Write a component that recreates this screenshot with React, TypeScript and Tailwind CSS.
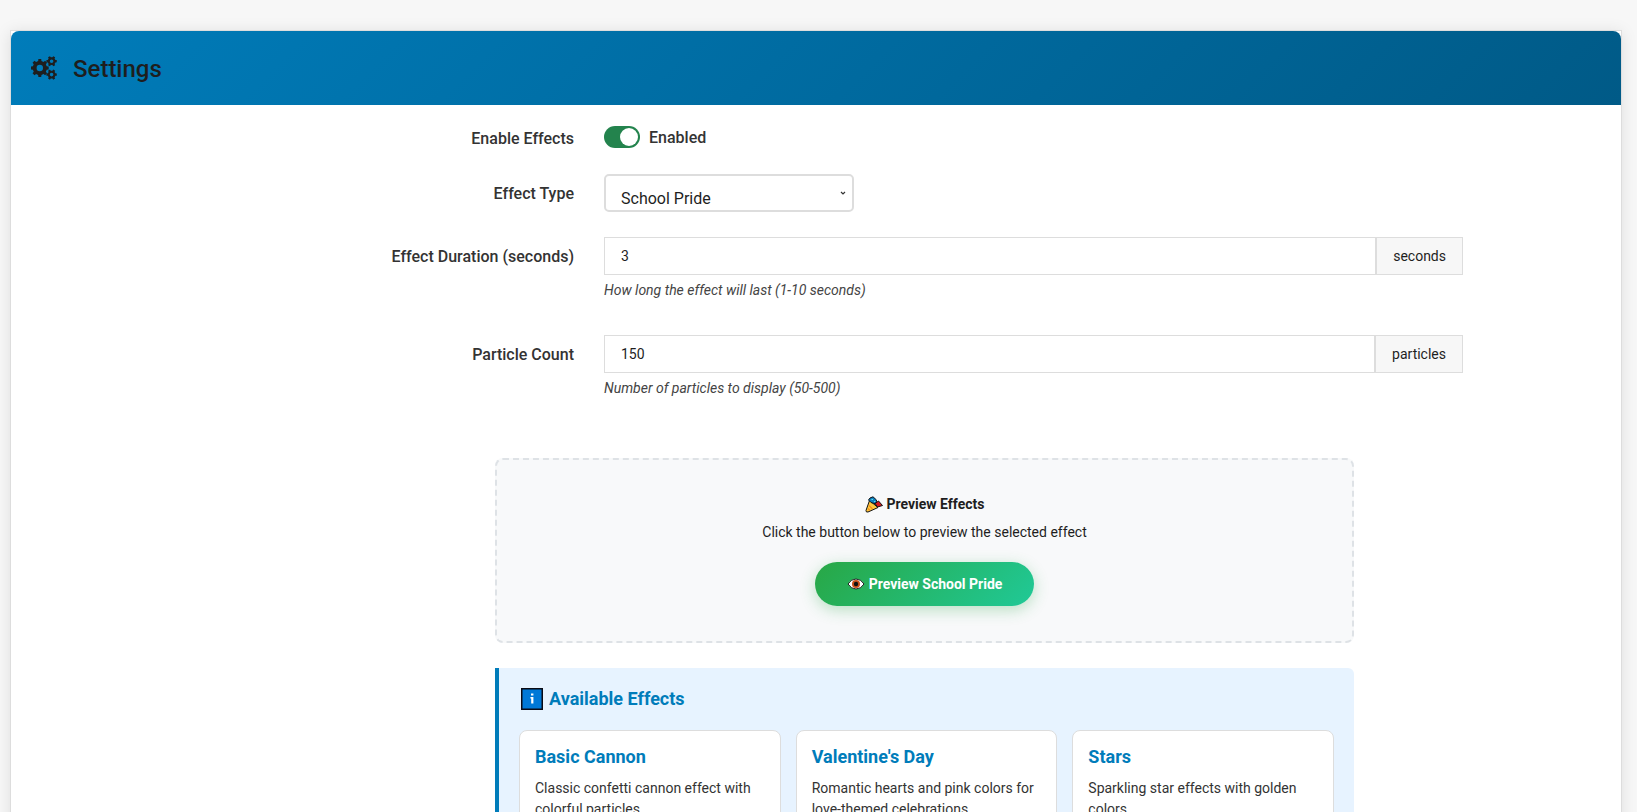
import React, { useState } from 'react';

const effects = [
  { value: 'basic', name: 'Basic Cannon', description: 'Classic confetti cannon effect with colorful particles.' },
  { value: 'valentine', name: "Valentine's Day", description: 'Romantic hearts and pink colors for love-themed celebrations.' },
  { value: 'stars', name: 'Stars', description: 'Sparkling star effects with golden colors.' },
];

// Builds a gear outline with square teeth and a round hole
const gearPath = (cx: number, cy: number, outer: number, inner: number, hole: number, teeth: number) => {
  const step = (Math.PI * 2) / teeth;
  const at = (r: number, a: number) => `${(cx + r * Math.cos(a)).toFixed(2)} ${(cy + r * Math.sin(a)).toFixed(2)}`;
  let d = '';
  for (let i = 0; i < teeth; i++) {
    const a = i * step;
    d += `${i === 0 ? 'M' : 'L'}${at(inner, a - step * 0.3)}L${at(outer, a - step * 0.2)}L${at(outer, a + step * 0.2)}L${at(inner, a + step * 0.3)}`;
  }
  return `${d}ZM${cx - hole} ${cy}a${hole} ${hole} 0 1 0 ${hole * 2} 0a${hole} ${hole} 0 1 0 ${-hole * 2} 0Z`;
};

const GearsIcon = () => (
  <svg width="26" height="24" viewBox="0 0 26 24" fill="currentColor" fillRule="evenodd" aria-hidden="true">
    <path d={gearPath(8.8, 12, 9, 7.1, 3.2, 8)} />
    <path d={gearPath(20.6, 5.2, 5.3, 4, 1.8, 6)} />
    <path d={gearPath(20.6, 18.6, 5.3, 4, 1.8, 6)} />
  </svg>
);

const PartyIcon = () => (
  <svg width="18" height="17" viewBox="0 0 18 17" aria-hidden="true">
    <path d="M4.5 4.5 1 14.5Q.8 16.5 3 16L13 11.5Z" fill="#ffc83d" stroke="#111" />
    <path d="M3.5 4 5 2l3-1.2L11.5 4l-.5 4L6 6.5Z" fill="#0b7fc2" stroke="#111" />
    <path d="M10 7.5 13.5 5l4 4.5-5 1.5Z" fill="#d71920" stroke="#111" />
    <path d="M6.5 3.5H8M9 5.5h1.5" stroke="#5fe0e8" strokeWidth="1.2" />
    <path d="M4 9.5 7.5 13M3 12.5l2 2" stroke="#f28c1b" strokeWidth="1.2" />
  </svg>
);

const EyeIcon = () => (
  <svg width="18" height="12" viewBox="0 0 18 12" aria-hidden="true">
    <path d="M1 6Q4 1 9 1T17 6Q14 11 9 11T1 6Z" fill="#fff" stroke="#222" />
    <circle cx="9" cy="6" r="4" fill="#c8511b" />
    <circle cx="9" cy="6" r="2.2" fill="#111" />
  </svg>
);

const InfoIcon = () => (
  <svg width="22" height="22" viewBox="0 0 22 22" aria-hidden="true">
    <rect x=".75" y=".75" width="20.5" height="20.5" fill="#0078d7" stroke="#0a0a14" strokeWidth="1.5" />
    <path d="M10 5.5h2.4v2H10ZM9.4 9h3v6.5h-2.2v-5h-.8Z" fill="#fff" />
  </svg>
);

interface FieldRowProps {
  label: string;
  htmlFor: string;
  children: React.ReactNode;
}

const FieldRow = ({ label, htmlFor, children }: FieldRowProps) => (
  <div className="grid grid-cols-[563fr_859fr_128fr] gap-x-[30px]">
    <label htmlFor={htmlFor} className="flex h-[38px] items-center justify-end pt-[2px] text-base font-medium text-[#333]">
      {label}
    </label>
    <div>{children}</div>
  </div>
);

interface NumberFieldProps {
  id: string;
  value: number;
  min: number;
  max: number;
  unit: string;
  help: string;
  onChange: (value: number) => void;
}

const NumberField = ({ id, value, min, max, unit, help, onChange }: NumberFieldProps) => (
  <>
    <div className="flex h-[38px]">
      <input
        id={id}
        type="number"
        min={min}
        max={max}
        value={value}
        onChange={(e) => onChange(Number(e.target.value))}
        aria-describedby={`${id}-help`}
        className="min-w-0 flex-1 border border-[#ddd] bg-white px-4 text-sm text-[#1e1e1e]"
      />
      <span className="flex items-center border border-[#ddd] bg-[#f7f7f7] px-4 text-sm text-[#1e1e1e]">{unit}</span>
    </div>
    <p id={`${id}-help`} className="mt-[5px] text-sm italic text-[#444]">{help}</p>
  </>
);

const App: React.FC = () => {
  const [enabled, setEnabled] = useState(true);
  const [duration, setDuration] = useState(3);
  const [particles, setParticles] = useState(150);

  return (
    <div className="h-screen overflow-hidden bg-[#f7f7f7] pt-[30px] pr-[15px] pl-[10px] font-['Roboto',sans-serif] text-[#1e1e1e]">
      <main className="min-h-screen border border-[#ddd] bg-white shadow-[0_2px_15px_rgba(0,0,0,0.1)]">
        <header className="flex h-[74px] items-center gap-4 rounded-t-lg bg-[linear-gradient(135deg,#007cba_0%,#005a87_100%)] px-5">
          <GearsIcon />
          <h1 className="pt-[2px] text-2xl font-medium">Settings</h1>
        </header>

        <div className="flex flex-col pt-[14px]">
          <FieldRow label="Enable Effects" htmlFor="enable-effects">
            <label className="flex h-9 items-center gap-[9px] text-base font-medium text-[#333]">
              <input
                id="enable-effects"
                type="checkbox"
                checked={enabled}
                onChange={(e) => setEnabled(e.target.checked)}
                className="peer sr-only"
              />
              <span className="flex h-[22px] w-9 rounded-full bg-[#999] p-[2px] peer-checked:justify-end peer-checked:bg-[#23834d]">
                <span className="size-[18px] rounded-full bg-white" />
              </span>
              <span className="pt-[2px]">{enabled ? 'Enabled' : 'Disabled'}</span>
            </label>
          </FieldRow>

          <div className="mt-[17px]">
            <FieldRow label="Effect Type" htmlFor="effect-type">
              <div className="relative w-[250px]">
                <select
                  id="effect-type"
                  defaultValue="pride"
                  className="block h-[38px] w-full appearance-none rounded-[5px] border-2 border-[#ddd] bg-white px-[15px] pt-[11px] text-base"
                >
                  <option value="pride">School Pride</option>
                  {effects.map((effect) => (
                    <option key={effect.value} value={effect.value}>{effect.name}</option>
                  ))}
                </select>
                <svg className="pointer-events-none absolute top-[17px] right-2" width="6" height="5" viewBox="0 0 6 5" fill="none" stroke="#333" strokeWidth="1.2">
                  <path d="M1 1l2 2 2-2" />
                </svg>
              </div>
            </FieldRow>
          </div>

          <div className="mt-[25px]">
            <FieldRow label="Effect Duration (seconds)" htmlFor="effect-duration">
              <NumberField
                id="effect-duration"
                value={duration}
                min={1}
                max={10}
                unit="seconds"
                help="How long the effect will last (1-10 seconds)"
                onChange={setDuration}
              />
            </FieldRow>
          </div>

          <div className="mt-[35px]">
            <FieldRow label="Particle Count" htmlFor="particle-count">
              <NumberField
                id="particle-count"
                value={particles}
                min={50}
                max={500}
                unit="particles"
                help="Number of particles to display (50-500)"
                onChange={setParticles}
              />
            </FieldRow>
          </div>

          <div className="mt-[60px] grid grid-cols-[484fr_859fr_267fr]">
            <div className="col-start-2 flex flex-col gap-[25px]">
              <section className="flex flex-col items-center rounded-lg border-2 border-dashed border-[#dee2e6] bg-[#f8f9fa] pt-[34px] pb-[35px] text-sm">
                <h2 className="flex items-center gap-1 font-bold">
                  <PartyIcon />
                  Preview Effects
                </h2>
                <p className="mt-2">Click the button below to preview the selected effect</p>
                <button
                  type="button"
                  className="mt-5 flex h-11 items-center gap-1 rounded-full bg-[linear-gradient(135deg,#28a745_0%,#20c997_100%)] px-8 font-bold text-white shadow-[0_4px_15px_rgba(40,167,69,0.3)]"
                >
                  <EyeIcon />
                  Preview School Pride
                </button>
              </section>

              <section className="rounded-r-md border-l-4 border-[#007cba] bg-[#e7f3ff] p-5">
                <h2 className="flex h-[22px] items-center gap-[6px] pl-[2px] text-lg font-bold text-[#007cba]">
                  <InfoIcon />
                  Available Effects
                </h2>
                <div className="mt-5 grid grid-cols-3 gap-[15px]">
                  {effects.map((effect) => (
                    <article key={effect.value} className="rounded-lg border border-[#ddd] bg-white p-[15px]">
                      <h3 className="text-lg leading-[22px] font-bold text-[#007cba]">{effect.name}</h3>
                      <p className="mt-[10px] text-sm leading-[21px] text-[#333]">{effect.description}</p>
                    </article>
                  ))}
                </div>
              </section>
            </div>
          </div>
        </div>
      </main>
    </div>
  );
};

export default App;
